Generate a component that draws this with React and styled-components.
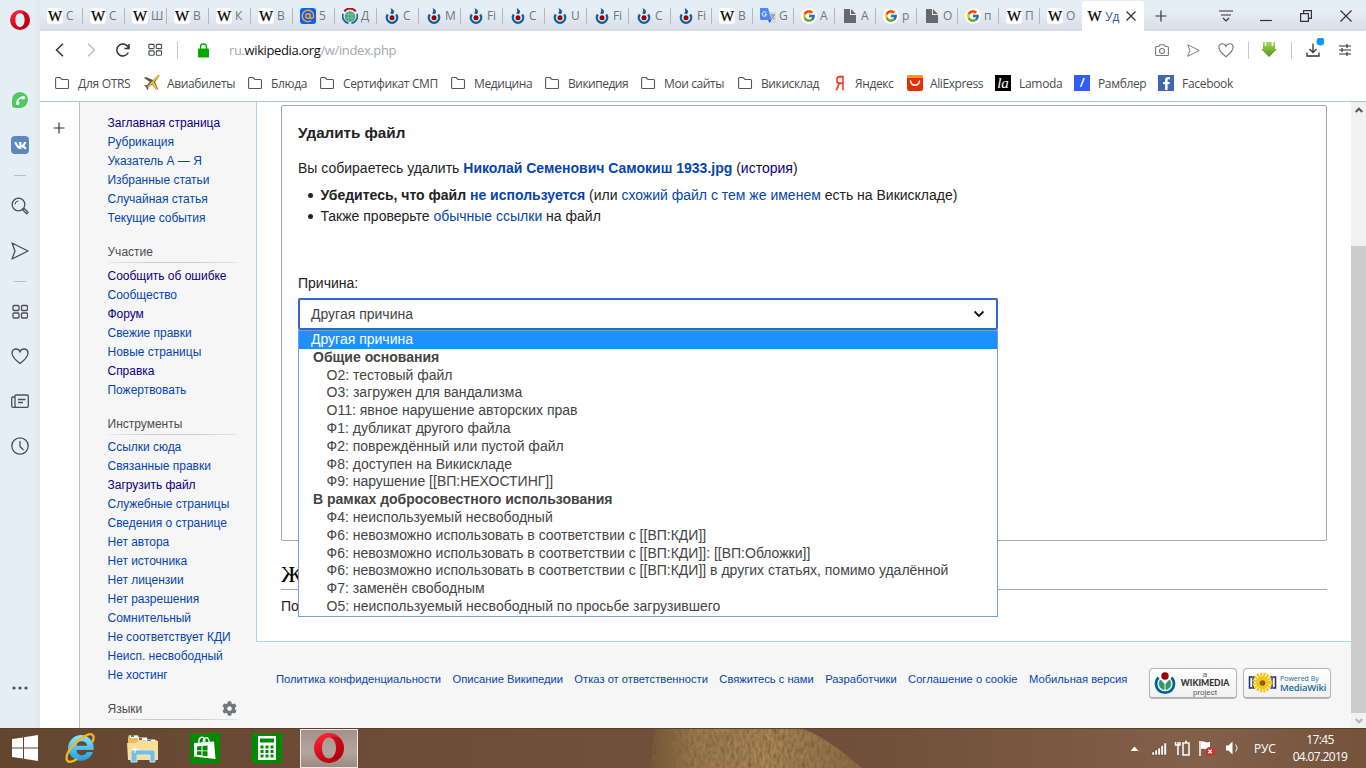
import React from 'react';
import styled, { createGlobalStyle } from 'styled-components';
import { FaCog, FaPhoneAlt, FaVk, FaFacebookF } from 'react-icons/fa';
import { FcGoogle } from 'react-icons/fc';

const GlobalStyle = createGlobalStyle`
  * {
    box-sizing: border-box;
  }
  body {
    margin: 0;
    overflow: hidden;
    background: #fff;
  }
  svg {
    display: block;
    flex: none;
  }
`;

const Screen = styled.div`
  width: 1366px;
  height: 768px;
  display: flex;
  flex-direction: column;
  overflow: hidden;
  font-family: "Liberation Sans", Arial, sans-serif;
`;
const Browser = styled.div`
  height: 728px;
  display: flex;
  background: #e5edf5;
`;
const Main = styled.div`
  width: 1326px;
  display: flex;
  flex-direction: column;
`;

// Боковая панель Opera
const Rail = styled.div`
  width: 40px;
  display: flex;
  flex-direction: column;
  align-items: center;
  background: linear-gradient(to right, #e5edf5 32px, #dfe7ef 40px);
`;
const RailSlot = styled.div`
  height: ${(props) => props.height}px;
  margin-top: ${(props) => props.space || 0}px;
  display: flex;
  align-items: center;
  justify-content: center;
`;
const RailLine = styled.div`
  width: 12px;
  height: 1px;
  background: #b3bec8;
`;
const VkTile = styled.div`
  width: 18px;
  height: 18px;
  border-radius: 4px;
  background: #5b88bd;
  color: #fff;
  display: flex;
  align-items: center;
  justify-content: center;
`;
const WhatsTile = styled.div`
  width: 16px;
  height: 16px;
  border-radius: 8px 8px 8px 3px;
  background: #4fc963;
  color: #fff;
  box-shadow: 0 0 0 1px #f4faf6;
  display: flex;
  align-items: center;
  justify-content: center;
`;

// Вкладки
const TabStrip = styled.div`
  height: 31px;
  display: flex;
  background: linear-gradient(#e5edf5 12px, #d7dde6 31px);
`;
const TabItem = styled.div`
  width: ${(props) => props.width}px;
  height: 31px;
  padding-left: 7px;
  display: flex;
  flex: none;
  align-items: center;
  &::after {
    content: "";
    width: 1px;
    height: 16px;
    margin-left: auto;
    background: ${(props) => (props.last ? 'transparent' : '#b3b8be')};
  }
`;
const TabIcon = styled.div`
  width: 16px;
  height: 16px;
  display: flex;
  align-items: center;
  justify-content: center;
  border-radius: ${(props) => (props.round ? '8px' : '3px')};
  background: ${(props) => props.bg || 'transparent'};
`;
const WikiW = styled.span`
  font: 15px/16px "Liberation Serif", serif;
  -webkit-text-stroke: 0.25px #000;
  color: #000;
`;
const TabText = styled.span`
  margin-left: 3px;
  white-space: nowrap;
  font: 12px "Open Sans", sans-serif;
  letter-spacing: -0.3px;
  color: ${(props) => (props.active ? '#2b5590' : '#72777c')};
`;
const ActiveTab = styled.div`
  width: 62px;
  height: 30px;
  margin-top: 1px;
  padding: 0 2px 0 5px;
  display: flex;
  flex: none;
  align-items: center;
  background: #fff;
  border-radius: 3px 3px 0 0;
`;
const WindowButtons = styled.div`
  flex: 1;
  display: flex;
  align-items: center;
  padding-left: 10px;
`;
const Hole = styled.div`
  width: ${(props) => props.width}px;
  height: ${(props) => props.height || 30}px;
  margin-left: ${(props) => props.space || 0}px;
  display: flex;
  flex: none;
  align-items: center;
  justify-content: center;
`;

// Адресная строка и закладки
const Toolbar = styled.div`
  height: 38px;
  display: flex;
  align-items: center;
  padding-left: 3px;
  background: #fff;
`;
const Divider = styled.div`
  width: 1px;
  height: 17px;
  margin: ${(props) => props.margin};
  flex: none;
  background: #c4c7ca;
`;
const Url = styled.div`
  flex: 1;
  margin-left: 16px;
  white-space: nowrap;
  font: 13px "Open Sans", sans-serif;
  letter-spacing: -0.38px;
  color: #a5a8ab;
  b {
    font-weight: normal;
    color: #111;
  }
`;
const Bookmarks = styled.div`
  height: 33px;
  display: flex;
  align-items: center;
  padding: 0 0 4px 15px;
  background: #fff;
  border-bottom: 1px solid #b5c1cc;
`;
const Bookmark = styled.div`
  width: ${(props) => props.width}px;
  display: flex;
  align-items: center;
  white-space: nowrap;
  font: 12px "Open Sans", sans-serif;
  letter-spacing: ${(props) => props.tracking || 0}px;
  color: #484c50;
`;
const BookmarkIcon = styled.div`
  width: 16px;
  height: 16px;
  margin-right: 7px;
`;
const Square = styled.div`
  width: 16px;
  height: 16px;
  margin-left: -1px;
  display: flex;
  align-items: center;
  justify-content: center;
  color: #fff;
  background: ${(props) => props.bg};
  font: ${(props) => props.font || 'bold 12px "Liberation Sans", sans-serif'};
  letter-spacing: 0;
`;
const YandexLetter = styled.div`
  width: 16px;
  text-align: center;
  color: #f33b1d;
  font: 20px/16px "Liberation Sans", sans-serif;
  letter-spacing: 0;
  transform: scaleX(0.65);
  -webkit-text-stroke: 0.6px #f33b1d;
`;

// Страница
const Page = styled.div`
  height: 626px;
  display: flex;
  background: #f6f6f6;
`;
const PlusColumn = styled.div`
  width: 40px;
  padding: 20px 0 0 13px;
  background: #fff;
  border-right: 1px solid #bfc1c4;
`;
const WikiNav = styled.div`
  width: 176px;
  padding: 12px 0 0 27.5px;
  overflow: hidden;
`;
const NavTitle = styled.div`
  width: 129.5px;
  height: 21px;
  margin: 14px 0 ${(props) => props.below || 4}px;
  padding-bottom: 1px;
  display: flex;
  align-items: center;
  justify-content: space-between;
  font-size: 12px;
  color: #4d4d4d;
  border-bottom: 1px solid;
  border-image: linear-gradient(to right, #eee, #c8ccd1 33%, #c8ccd1 66%, #e4e6e8) 1;
`;
const NavLink = styled.div`
  height: 19px;
  line-height: 19px;
  font-size: 12px;
  letter-spacing: -0.02px;
  white-space: nowrap;
  color: ${(props) => (props.visited ? '#0b0080' : '#0645ad')};
`;
const Column = styled.div`
  width: 1095px;
  display: flex;
  flex-direction: column;
`;
const Content = styled.div`
  height: 540px;
  padding: 3px 24px 0;
  background: #fff;
  border-left: 1px solid #a7d7f9;
  border-bottom: 1px solid #a7d7f9;
  font-size: 14px;
  color: #222;
`;
const Panel = styled.div`
  height: 436px;
  padding: 16px;
  border: 1px solid #a2a9b1;
  border-radius: 2px;
`;
const PanelTitle = styled.div`
  line-height: 22px;
  font-size: 15.2px;
  font-weight: bold;
`;
const Line = styled.div`
  margin-top: ${(props) => props.top}px;
  line-height: 22px;
`;
const Link = styled.span`
  color: ${(props) => (props.visited ? '#0b0080' : '#0645ad')};
`;
const List = styled.ul`
  margin: 6px 0 0;
  padding: 0 0 0 22.4px;
  list-style: none;
  line-height: 21px;
  li {
    display: flex;
    align-items: center;
    white-space: pre;
  }
  li::before {
    content: "";
    width: 5px;
    height: 5px;
    margin: 0 7.600px 0 -12.600px;
    border-radius: 50%;
    background: #222;
  }
`;
const SelectWrap = styled.div`
  position: relative;
  width: 700px;
  margin-top: 4px;
`;
const Select = styled.div`
  height: 32px;
  padding: 0 11px;
  display: flex;
  align-items: center;
  justify-content: space-between;
  border: 2px solid #36c;
  border-radius: 2px;
  color: #444;
`;
const Menu = styled.div`
  position: absolute;
  z-index: 2;
  top: 32px;
  left: 0;
  width: 700px;
  height: 287px;
  background: #fff;
  border: 1px solid #7b9bd0;
`;
const Option = styled.div`
  height: 17.8px;
  line-height: 17.8px;
  white-space: nowrap;
  padding-left: ${(props) => (props.group ? 14 : props.active ? 12 : 27.5)}px;
  font-weight: ${(props) => (props.group ? 'bold' : 'normal')};
  color: ${(props) => (props.active ? '#fff' : '#444')};
  background: ${(props) => (props.active ? '#1e90ff' : '#fff')};
`;
const LogTitle = styled.div`
  height: 32px;
  margin-top: 17px;
  font: 24px/33px "Liberation Serif", serif;
  color: #000;
  border-bottom: 1px solid #a2a9b1;
`;
const Footer = styled.div`
  height: 86px;
  padding: 26px 0 0 20px;
  display: flex;
  font-size: 11.2px;
  color: #0645ad;
`;
const FooterLinks = styled.div`
  width: 873px;
  height: 22px;
  flex: none;
  display: flex;
  align-items: center;
  gap: 11.4px;
  white-space: nowrap;
`;
const Badge = styled.div`
  width: 88px;
  height: 31px;
  margin-right: 6px;
  flex: none;
  display: flex;
  align-items: center;
  padding-left: 4px;
  border: 1px solid #b4b4b4;
  border-bottom-width: 2px;
  border-radius: 4px;
  background: linear-gradient(#fff, #f0f0f0);
`;
const WikimediaText = styled.div`
  width: 54px;
  margin-left: 2px;
  text-align: center;
  font: 8px/9px "Liberation Sans", sans-serif;
  color: #555;
  b {
    display: block;
    font: 900 8.6px/9px "Lato", sans-serif;
    color: #333;
  }
`;
const MediaWikiText = styled.div`
  margin-left: 3px;
  font: 7px/9px "Open Sans", sans-serif;
  color: #1d6c9c;
  white-space: nowrap;
  b {
    display: block;
    font: 600 9.5px/10px "Open Sans", sans-serif;
    letter-spacing: -0.2px;
  }
`;
const Scrollbar = styled.div`
  width: 15px;
  display: flex;
  flex-direction: column;
  align-items: center;
  background: #f1f1f1;
`;
const Thumb = styled.div`
  width: 15px;
  height: 467px;
  margin-top: 129px;
  background: #cdcdcd;
`;

// Панель задач Windows
const Taskbar = styled.div`
  position: relative;
  height: 40px;
  display: flex;
  align-items: center;
  overflow: hidden;
  color: #fff;
  background: linear-gradient(to right, #634630, #6b4b36 20%, #70503b 45%, #6f4f39 62%, #7b5941 78%, #83604a 88%, #755239);
`;
const Backdrop = styled.svg`
  position: absolute;
  top: 0;
  left: 0;
`;
const TaskIcon = styled.div`
  position: relative;
  width: ${(props) => props.width}px;
  height: 40px;
  display: flex;
  flex: none;
  align-items: center;
  justify-content: center;
`;
const GreenTile = styled.div`
  width: 30px;
  height: 30px;
  display: flex;
  align-items: center;
  justify-content: center;
  background: #008a00;
`;
const OperaTile = styled.div`
  position: relative;
  width: 58px;
  height: 39px;
  margin-left: 2px;
  display: flex;
  flex: none;
  align-items: center;
  justify-content: center;
  border: 1px solid #efe9e5;
  background: linear-gradient(#a3928a, #b3a59d 60%, #9b8a80);
`;
const Tray = styled.div`
  position: relative;
  width: 238px;
  margin-left: auto;
  display: flex;
  flex: none;
  align-items: center;
  font: 12px "Open Sans", sans-serif;
`;
const Lang = styled.div`
  width: 24px;
  margin-left: 14px;
  flex: none;
  letter-spacing: -0.2px;
`;
const Clock = styled.div`
  width: 70px;
  margin-left: 7px;
  flex: none;
  text-align: center;
  white-space: nowrap;
  font: 12px/17px "Open Sans", sans-serif;
  letter-spacing: -0.65px;
`;

const OperaLogo = ({ size }) => (
  <svg width={size} height={size} viewBox="0 0 30 30">
    <defs>
      <linearGradient id={`op${size}`} x1="0" y1="0" x2="0.4" y2="1">
        <stop offset="0" stopColor="#ff2a3a" />
        <stop offset="1" stopColor="#c3000f" />
      </linearGradient>
    </defs>
    <path fillRule="evenodd" fill={`url(#op${size})`} d="M15 0a15 15 0 1 0 0 30a15 15 0 1 0 0-30zM15 4.500c4.500 0 7 5 7 10.500s-2.500 10.500-7 10.500s-7-5-7-10.500s2.500-10.500 7-10.500z" />
    <path fill="#a50010" opacity=".45" d="M17 4.500c7 3 7 18 0 21c3 2 7 1 9-.5a15 15 0 0 0 0-20c-2-1.500-6-2.500-9-.5z" />
  </svg>
);

const HeartIcon = ({ size, color }) => (
  <svg width={size} height={size} viewBox="0 0 18 18" fill="none" stroke={color} strokeWidth="1.300">
    <path d="M9 16.500C5 13.500 1 10 1 6C1 3.500 2.800 2 5 2C7 2 8.300 3 9 4.800C9.700 3 11 2 13 2C15.200 2 17 3.500 17 6C17 10 13 13.500 9 16.500z" />
  </svg>
);

const SendIcon = ({ size, color }) => (
  <svg width={size} height={size} viewBox="0 0 18 18" fill="none" stroke={color} strokeWidth="1.300" strokeLinejoin="round">
    <path d="M1 1L17 9L1 17L4 9z" />
  </svg>
);

const GridIcon = ({ size }) => (
  <svg width={size} height={size} viewBox="0 0 16 16" fill="none" stroke="#4a4f54" strokeWidth="1.300">
    <rect x="1" y="1.500" width="6" height="5" rx="1" />
    <rect x="9.500" y="1.500" width="6" height="5" rx="1" />
    <rect x="1" y="9" width="6" height="5" rx="1" />
    <rect x="9.500" y="9" width="6" height="5" rx="1" />
  </svg>
);

const PlusIcon = () => (
  <svg width="12" height="12" viewBox="0 0 12 12" stroke="#333" strokeWidth="1.200"><path d="M6 .5v11M.5 6h11" /></svg>
);

// капля Викисклада
const CommonsIcon = () => (
  <svg width="14" height="16" viewBox="0 0 14 16" fill="none">
    <path d="M2.800 6.500a5.200 5.200 0 1 0 8.400 0" stroke="#0a6199" strokeWidth="2.300" />
    <path d="M5.500 0C9.500 2 10 3.800 7.800 6.200L5 5.200C6.500 3.800 6.500 2.500 5.500 0z" fill="#0a6199" />
    <circle cx="7" cy="9.800" r="2.500" fill="#900" />
  </svg>
);

const FolderIcon = () => (
  <svg width="16" height="16" viewBox="0 0 16 16" fill="none" stroke="#55595d" strokeWidth="1.100">
    <path d="M.6 3.500a1 1 0 0 1 1-1H5l2 2h5.500a1 1 0 0 1 1 1v7a1 1 0 0 1-1 1H1.600a1 1 0 0 1-1-1z" />
  </svg>
);

const tabs = [
  ['w', 'С'], ['w', 'С'], ['w', 'Ш'], ['w', 'В'], ['w', 'К'], ['w', 'В'], ['mail', '5'], ['meta', 'Д'],
  ['commons', 'С'], ['commons', 'М'], ['commons', 'Fi'], ['commons', 'С'], ['commons', 'U'], ['commons', 'Fi'],
  ['commons', 'С'], ['commons', 'Fi'], ['w', 'В'], ['translate', 'G'], ['google', 'А'], ['doc', 'А'],
  ['google', 'р'], ['doc', 'О'], ['google', 'п'], ['w', 'П'], ['w', 'О'],
];

const Favicon = ({ kind }) => {
  if (kind === 'w') return <TabIcon bg="#fff"><WikiW>W</WikiW></TabIcon>;
  if (kind === 'google') return <TabIcon bg="#fff" round><FcGoogle size={14} /></TabIcon>;
  if (kind === 'commons') return <TabIcon><CommonsIcon /></TabIcon>;
  if (kind === 'mail') {
    return (
      <TabIcon bg="#0b5fff">
        <svg width="14" height="14" viewBox="0 0 14 14" fill="none" stroke="#f9ab1b" strokeWidth="1.400">
          <circle cx="7" cy="7" r="2.300" />
          <path d="M9.300 4.700v3.500c0 1.800 3.400 1.600 3.400-1.200a5.700 5.700 0 1 0-2.500 4.700" />
        </svg>
      </TabIcon>
    );
  }
  if (kind === 'meta') {
    return (
      <svg width="16" height="16" viewBox="0 0 16 16" fill="none">
        <circle cx="8" cy="8.500" r="5.300" fill="#4aa382" />
        <path d="M4 6.500h8M4 10h8M6.500 4v9M10 4v9" stroke="#8fcdb0" strokeWidth=".6" />
        <path d="M2.300 3.400a7.200 7.200 0 0 1 11.400 0" stroke="#a0151b" strokeWidth="2" />
        <path d="M1 5.800a7.200 7.200 0 0 0 5.500 9.400M15 5.800a7.200 7.200 0 0 1-5.500 9.400" stroke="#1b6a93" strokeWidth="1.800" />
      </svg>
    );
  }
  if (kind === 'translate') {
    return (
      <svg width="16" height="16" viewBox="0 0 16 16">
        <path d="M6 4h10v11h-7z" fill="#d9dadb" />
        <path d="M0 0h8l3.500 12H1a1 1 0 0 1-1-1z" fill="#4a89f3" />
        <path d="M8 12h3.500L9.500 15z" fill="#3060c0" />
        <path d="M6.300 4.800a2.200 2.200 0 1 0 .3 1.600H4.600" fill="none" stroke="#fff" strokeWidth="1" />
        <path d="M10.500 7h4.500M12.500 6v1M14 7c-.5 2-1.500 3.200-3 4M11.500 8c.5 1.500 1.700 2.500 3 3.200" fill="none" stroke="#6b7a8c" strokeWidth=".8" />
      </svg>
    );
  }
  return (
    <svg width="16" height="16" viewBox="0 0 16 16" fill="#66696c">
      <path d="M2 1h6v6h6v8H2zM9 1l5 5H9z" />
    </svg>
  );
};

const bookmarks = [
  ['folder', 'Для OTRS', 89, -0.3], ['plane', 'Авиабилеты', 104, -0.4], ['folder', 'Блюда', 72, -0.3],
  ['folder', 'Сертификат СМП', 131, -0.35], ['folder', 'Медицина', 94, -0.4], ['folder', 'Википедия', 96, -0.5],
  ['folder', 'Мои сайты', 97, -0.4], ['folder', 'Викисклад', 94, -0.4], ['ya', 'Яндекс', 75, -0.4],
  ['ali', 'AliExpress', 89, -0.4], ['la', 'Lamoda', 79, -0.3], ['rambler', 'Рамблер', 84, -0.35],
  ['fb', 'Facebook', 75, -0.3],
];

const BookmarkPic = ({ kind }) => {
  if (kind === 'folder') return <FolderIcon />;
  if (kind === 'plane') {
    return (
      <svg width="16" height="16" viewBox="0 0 16 16">
        <path d="M0 3l2-1 7 3 5-5 1.500 1L11 7l3 7-1.500 1L8 9.500 4.500 12 4 15l-1-.5-1-2.500-2-1.500 3-.5 3-3z" fill="#56585a" />
        <path d="M15.500 0L13 1 3 12l1 .5L15 2zM10 7l3.500 7-1 1L8 9z" fill="#fcc21b" />
      </svg>
    );
  }
  if (kind === 'ya') return <YandexLetter>Я</YandexLetter>;
  if (kind === 'ali') {
    return (
      <svg width="16" height="16" viewBox="0 0 16 16">
        <rect width="16" height="16" rx="2.500" fill="#e62e04" />
        <path d="M0 3V2.500A2.500 2.500 0 0 1 2.500 0h11A2.500 2.500 0 0 1 16 2.500V3z" fill="#f7971d" />
        <path d="M3.500 6c1 5.500 8 5.500 9 0" fill="none" stroke="#fff" strokeWidth="1.500" strokeLinecap="round" />
      </svg>
    );
  }
  if (kind === 'la') return <Square bg="#000" font={'italic 15px/14px "Liberation Serif", serif'}>la</Square>;
  if (kind === 'rambler') return <Square bg="#315efb" font={'italic bold 12px/14px "Liberation Sans", sans-serif'}>/</Square>;
  return <Square bg="#4267b2"><FaFacebookF size={13} /></Square>;
};

const navTop = [['Заглавная страница', 1], ['Рубрикация'], ['Указатель А — Я'], ['Избранные статьи'], ['Случайная статья'], ['Текущие события']];
const navHelp = [['Сообщить об ошибке', 1], ['Сообщество'], ['Форум', 1], ['Свежие правки'], ['Новые страницы'], ['Справка', 1], ['Пожертвовать']];
const navTools = [
  ['Ссылки сюда'], ['Связанные правки'], ['Загрузить файл', 1], ['Служебные страницы'], ['Сведения о странице'],
  ['Нет автора'], ['Нет источника'], ['Нет лицензии'], ['Нет разрешения'], ['Сомнительный'],
  ['Не соответствует КДИ'], ['Неисп. несвободный'], ['Не хостинг'],
];

const options = [
  { text: 'Другая причина', active: true },
  { text: 'Общие основания', group: true },
  { text: 'О2: тестовый файл' },
  { text: 'О3: загружен для вандализма' },
  { text: 'О11: явное нарушение авторских прав' },
  { text: 'Ф1: дубликат другого файла' },
  { text: 'Ф2: повреждённый или пустой файл' },
  { text: 'Ф8: доступен на Викискладе' },
  { text: 'Ф9: нарушение [[ВП:НЕХОСТИНГ]]' },
  { text: 'В рамках добросовестного использования', group: true },
  { text: 'Ф4: неиспользуемый несвободный' },
  { text: 'Ф6: невозможно использовать в соответствии с [[ВП:КДИ]]' },
  { text: 'Ф6: невозможно использовать в соответствии с [[ВП:КДИ]]: [[ВП:Обложки]]' },
  { text: 'Ф6: невозможно использовать в соответствии с [[ВП:КДИ]] в других статьях, помимо удалённой' },
  { text: 'Ф7: заменён свободным' },
  { text: 'О5: неиспользуемый несвободный по просьбе загрузившего' },
];

const footerLinks = [
  'Политика конфиденциальности', 'Описание Википедии', 'Отказ от ответственности', 'Свяжитесь с нами',
  'Разработчики', 'Соглашение о cookie', 'Мобильная версия',
];

const NavList = ({ items }) => items.map(([text, visited]) => (
  <NavLink key={text} visited={visited}>{text}</NavLink>
));

const SideRail = () => (
  <Rail>
    <RailSlot height={39}><OperaLogo size={20} /></RailSlot>
    <RailSlot height={44} space={39}><WhatsTile><FaPhoneAlt size={9} style={{ transform: 'rotate(90deg)' }} /></WhatsTile></RailSlot>
    <RailSlot height={46}><VkTile><FaVk size={13} /></VkTile></RailSlot>
    <RailSlot height={15}><RailLine /></RailSlot>
    <RailSlot height={46}>
      <svg width="18" height="18" viewBox="0 0 18 18" fill="none" stroke="#4a4f54" strokeWidth="1.300">
        <circle cx="7.500" cy="7.500" r="6.300" />
        <path d="M4 7.500a3.500 3.500 0 0 1 3.500-3.500" strokeWidth="1" />
        <path d="M12 12l1.500-.3 3.500 3.500-1.300 1.500-3.700-3.500z" />
      </svg>
    </RailSlot>
    <RailSlot height={44}><SendIcon size={18} color="#4a4f54" /></RailSlot>
    <RailSlot height={17}><RailLine /></RailSlot>
    <RailSlot height={44}><GridIcon size={16} /></RailSlot>
    <RailSlot height={44}><HeartIcon size={18} color="#4a4f54" /></RailSlot>
    <RailSlot height={45}>
      <svg width="18" height="16" viewBox="0 0 18 16" fill="none" stroke="#4a4f54" strokeWidth="1.300">
        <rect x="4" y="2" width="13.300" height="12.300" rx="1" />
        <path d="M4 4H1.700a1 1 0 0 0-1 1v8a1.300 1.300 0 0 0 1.300 1.300h3M7 6.500h7.500M7 9.500h5" />
      </svg>
    </RailSlot>
    <RailSlot height={45}>
      <svg width="18" height="18" viewBox="0 0 18 18" fill="none" stroke="#4a4f54" strokeWidth="1.300">
        <circle cx="9" cy="9" r="8.200" />
        <path d="M9 4v5.500l3.500 3.500" />
      </svg>
    </RailSlot>
    <RailSlot height={30} space={205}>
      <svg width="16" height="4" viewBox="0 0 16 4" fill="#4a4f54">
        <circle cx="2" cy="2" r="1.600" />
        <circle cx="8" cy="2" r="1.600" />
        <circle cx="14" cy="2" r="1.600" />
      </svg>
    </RailSlot>
  </Rail>
);

const tabWidth = (i) => {
  if (i === 0) return 43;
  return i < 15 || i === 24 ? 42 : 41;
};

const Tabs = () => (
  <TabStrip>
    {tabs.map(([kind, text], i) => (
      <TabItem key={i} width={tabWidth(i)} last={i === 24}>
        <Favicon kind={kind} />
        <TabText>{text}</TabText>
      </TabItem>
    ))}
    <ActiveTab>
      <TabIcon><WikiW>W</WikiW></TabIcon>
      <TabText active>Уд</TabText>
      <Hole width={23}>
        <svg width="10" height="10" viewBox="0 0 10 10" stroke="#333" strokeWidth="1.300"><path d="M.5.500l9 9M9.500.500l-9 9" /></svg>
      </Hole>
    </ActiveTab>
    <WindowButtons>
      <Hole width={13}><PlusIcon /></Hole>
      <Hole width={78} space={20}>
        <svg width="14" height="12" viewBox="0 0 14 12" fill="none" stroke="#333" strokeWidth="1.200"><path d="M0 1h14M2 5h10M4 8l3 3 3-3" /></svg>
      </Hole>
      <Hole width={1}>
        <svg width="12" height="12" viewBox="0 0 12 12" stroke="#333" strokeWidth="1.200"><path d="M0 10.500h12" /></svg>
      </Hole>
      <Hole width={79}>
        <svg width="12" height="12" viewBox="0 0 12 12" fill="none" stroke="#333" strokeWidth="1.200"><path d="M.6 3.600h7.800v7.800H.6zM3.600 3.500V.6h7.800v7.800H8.500" /></svg>
      </Hole>
      <Hole width={1}>
        <svg width="12" height="12" viewBox="0 0 12 12" stroke="#333" strokeWidth="1.200"><path d="M.5.500l11 11M11.500.500l-11 11" /></svg>
      </Hole>
    </WindowButtons>
  </TabStrip>
);

const AddressBar = () => (
  <Toolbar>
    <Hole width={32}>
      <svg width="9" height="14" viewBox="0 0 9 14" fill="none" stroke="#333" strokeWidth="1.500"><path d="M8 .7L1.500 7 8 13.300" /></svg>
    </Hole>
    <Hole width={32}>
      <svg width="9" height="14" viewBox="0 0 9 14" fill="none" stroke="#bbb" strokeWidth="1.300"><path d="M1 .7L7.500 7 1 13.300" /></svg>
    </Hole>
    <Hole width={32}>
      <svg width="14" height="14" viewBox="0 0 14 14" fill="none" stroke="#333" strokeWidth="1.500"><path d="M12.300 9.500A6 6 0 1 1 12.500 5M13 1v4.500H8.500" /></svg>
    </Hole>
    <Hole width={32}><GridIcon size={14} /></Hole>
    <Divider margin="0 15px 0 6px" />
    <Hole width={20}>
      <svg width="11" height="15" viewBox="0 0 11 15">
        <rect y="5.500" width="11" height="9" rx="1" fill="#00a800" />
        <path d="M2.500 6V4a3 3 0 0 1 6 0v2" fill="none" stroke="#00a800" strokeWidth="1.300" />
      </svg>
    </Hole>
    <Url>ru.<b>wikipedia.org</b>/w/index.php</Url>
    <Hole width={14}>
      <svg width="14" height="13" viewBox="0 0 14 13" fill="none" stroke="#777" strokeWidth="1.100">
        <path d="M.6 3.500a1 1 0 0 1 1-1h2.200l1-1.700h4.400l1 1.700h2.200a1 1 0 0 1 1 1v7a1 1 0 0 1-1 1H1.600a1 1 0 0 1-1-1z" />
        <circle cx="7" cy="7" r="2.500" />
      </svg>
    </Hole>
    <Hole width={49}><SendIcon size={13} color="#777" /></Hole>
    <Hole width={15}><HeartIcon size={16} color="#777" /></Hole>
    <Divider margin="0 12px 0 15px" />
    <Hole width={16}>
      <svg width="16" height="16" viewBox="0 0 16 16">
        <defs>
          <linearGradient id="green" x1="0" y1="0" x2="0" y2="1">
            <stop offset="0" stopColor="#a5d853" />
            <stop offset="1" stopColor="#4f9410" />
          </linearGradient>
        </defs>
        <path d="M2 0h1.700v4h1.600V0h5.400v4h1.600V0H14v7h2l-8 8-8-8h2z" fill="url(#green)" />
      </svg>
    </Hole>
    <Divider margin="0 14px 0 14px" />
    <Hole width={18}>
      <svg width="18" height="24" viewBox="0 0 18 24" fill="none" stroke="#333" strokeWidth="1.300">
        <path d="M7 5.500v8.500M3.500 11L7 14.500 10.500 11M1 14.500V18h12v-3.500" />
        <circle cx="14.500" cy="3.500" r="4" fill="#0b98ff" stroke="none" />
      </svg>
    </Hole>
    <Hole width={42}>
      <svg width="12" height="12" viewBox="0 0 12 12" stroke="#333" strokeWidth="1.200"><path d="M0 2h12M0 6h12M0 10h12M8 0v4M3 4v4M8 8v4" /></svg>
    </Hole>
  </Toolbar>
);

const DeletePage = () => (
  <Page>
    <PlusColumn><PlusIcon /></PlusColumn>
    <WikiNav>
      <NavList items={navTop} />
      <NavTitle>Участие</NavTitle>
      <NavList items={navHelp} />
      <NavTitle below={3}>Инструменты</NavTitle>
      <NavList items={navTools} />
      <NavTitle>Языки<FaCog size={15} color="#72777d" /></NavTitle>
    </WikiNav>
    <Column>
      <Content>
        <Panel>
          <PanelTitle>Удалить файл</PanelTitle>
          <Line top={13}>
            Вы собираетесь удалить <Link><b>Николай Семенович Самокиш 1933.jpg</b></Link> (<Link visited>история</Link>)
          </Line>
          <List>
            <li><b>Убедитесь, что файл <Link>не используется</Link></b> (или <Link>схожий файл с тем же именем</Link> есть на Викискладе)</li>
            <li>Также проверьте <Link>обычные ссылки</Link> на файл</li>
          </List>
          <Line top={45}>Причина:</Line>
          <SelectWrap>
            <Select>
              Другая причина
              <svg width="12" height="8" viewBox="0 0 12 8" fill="none" stroke="#111" strokeWidth="1.800"><path d="M1.500 1.500L6 6l4.500-4.500" /></svg>
            </Select>
            <Menu>
              {options.map((option) => (
                <Option key={option.text} active={option.active} group={option.group}>{option.text}</Option>
              ))}
            </Menu>
          </SelectWrap>
        </Panel>
        <LogTitle>Ж</LogTitle>
        <Line top={5}>По</Line>
      </Content>
      <Footer>
        <FooterLinks>
          {footerLinks.map((text) => <span key={text}>{text}</span>)}
        </FooterLinks>
        <Badge>
          <svg width="22" height="23" viewBox="0 0 22 23" fill="none">
            <path d="M4.500 5.500a9 9 0 1 0 13 0" stroke="#069" strokeWidth="2.800" />
            <path d="M6.500 8a6 6 0 0 0 3.500 9.500V12z" fill="#396" stroke="#396" />
            <path d="M15.500 8a6 6 0 0 1-3.500 9.500V12z" fill="#396" stroke="#396" />
            <circle cx="11" cy="4" r="3.700" fill="#900" />
          </svg>
          <WikimediaText>a<b>WIKIMEDIA</b>project</WikimediaText>
        </Badge>
        <Badge>
          <svg width="29" height="22" viewBox="0 0 29 22" fill="none">
            <path d="M4 5H1.500v11H4M7 5H5v11h2M25 5h2.500v11H25M22 5h2v11h-2" stroke="#1b2f6b" strokeWidth="1.500" />
            <circle cx="14.500" cy="10.500" r="7.500" stroke="#f5c518" strokeWidth="5" strokeDasharray="2 1" />
            <circle cx="14.500" cy="10.500" r="6.500" fill="#f5c518" />
            <circle cx="14.500" cy="11" r="2.800" fill="#8a5a13" />
          </svg>
          <MediaWikiText>Powered By<b>MediaWiki</b></MediaWikiText>
        </Badge>
      </Footer>
    </Column>
    <Scrollbar>
      <Hole width={15} height={15}>
        <svg width="8" height="6" viewBox="0 0 8 6" fill="none" stroke="#555" strokeWidth="2"><path d="M.7 5L4 1.700 7.300 5" /></svg>
      </Hole>
      <Thumb />
      <Hole width={15} height={15}>
        <svg width="8" height="6" viewBox="0 0 8 6" fill="none" stroke="#b5b5b5" strokeWidth="2"><path d="M.7 1L4 4.300 7.300 1" /></svg>
      </Hole>
    </Scrollbar>
  </Page>
);

const WindowsBar = () => (
  <Taskbar>
    <Backdrop width="1366" height="40" viewBox="0 0 1366 40">
      <defs>
        <filter id="grain" x="0" y="0" width="1" height="1">
          <feTurbulence type="fractalNoise" baseFrequency="0.35 0.15" numOctaves="3" seed="4" result="noise" />
          <feColorMatrix in="noise" values="0 0 0 0 .2  0 0 0 0 .12  0 0 0 0 .04  0 1.800 0 0 -.55" result="dark" />
          <feComposite in="dark" in2="SourceGraphic" operator="in" result="spots" />
          <feMerge><feMergeNode in="SourceGraphic" /><feMergeNode in="spots" /></feMerge>
        </filter>
        <linearGradient id="rock" x1="0" x2="1">
          <stop offset="0" stopColor="#6f5036" />
          <stop offset=".2" stopColor="#9c7850" />
          <stop offset=".55" stopColor="#ab8659" />
          <stop offset="1" stopColor="#8a6846" />
        </linearGradient>
      </defs>
      <path d="M656 0H798C818 5 836 18 862 40H650C652 25 652 12 656 0z" fill="url(#rock)" filter="url(#grain)" />
      <path d="M0 .5h1366" stroke="#54402f" />
    </Backdrop>
    <TaskIcon width={50}>
      <svg width="26" height="26" viewBox="0 0 26 26" fill="#fff"><path d="M0 4l11-1.500V12.500H0zM12 2.300L26 0v12.500H12zM0 13.500h11v10L0 22zM12 13.500h14V26l-14-2.300z" /></svg>
    </TaskIcon>
    <TaskIcon width={62}>
      <svg width="32" height="32" viewBox="0 0 32 32" fill="none">
        <defs>
          <linearGradient id="ie" x1="0" y1="0" x2="0" y2="1">
            <stop offset="0" stopColor="#8be4fd" />
            <stop offset="1" stopColor="#1f9fe2" />
          </linearGradient>
        </defs>
        <path d="M28.500 18H11.500a5.500 5.500 0 0 0 10.500 2h6A12.800 12.800 0 1 1 28.500 18zM11.500 13.800h10.700a5.400 5.400 0 0 0-10.700 0z" fillRule="evenodd" fill="url(#ie)" />
        <path d="M27.500 10C30 4 28 .5 22 3C12 7-2 22 2.500 29C5 31 9 29 12 27" stroke="#f3b91b" strokeWidth="2.300" />
      </svg>
    </TaskIcon>
    <TaskIcon width={62}>
      <svg width="32" height="30" viewBox="0 0 32 30">
        <path d="M1 4l1-2h9l1 3h8l1 2h9v20H1z" fill="#e3bd63" />
        <path d="M3 3h8v2H3z" fill="#fff" /><path d="M4 2h3v2H4z" fill="#19a93c" />
        <path d="M11 4.500h9v3h-9z" fill="#fff" /><path d="M12 5h3v2h-3z" fill="#d8392c" />
        <path d="M19 6.500h9v3h-9z" fill="#fff" /><path d="M20 7h4v2h-4z" fill="#2b8be0" />
        <path d="M0 10h9l2-2h20v19H1z" fill="#f7df94" />
        <path d="M4 29V19a2 2 0 0 1 2-2h20a2 2 0 0 1 2 2v10h-5v-7H10v7z" fill="#78bde0" stroke="#c9ecf9" strokeWidth="1" />
        <path d="M8 13v7M4.500 16.500h7" stroke="#fff" strokeWidth="1" />
      </svg>
    </TaskIcon>
    <TaskIcon width={62}>
      <GreenTile>
        <svg width="24" height="26" viewBox="0 0 24 26">
          <path d="M1 8l20-1.500L22.500 24 1 21.500z" fill="#fff" />
          <path d="M6 8c-1-7 6-8 6-1M10 8c0-7 7-7 6 0" fill="none" stroke="#fff" strokeWidth="1.300" />
          <path d="M4 11.500l4.500-.5v4.300H4zM9.500 11l5-.6v5H9.500zM4 16.300h4.500v4L4 19.800zM9.500 16.300h5v5l-5-.6z" fill="#008a00" />
        </svg>
      </GreenTile>
    </TaskIcon>
    <TaskIcon width={62}>
      <GreenTile>
        <svg width="18" height="24" viewBox="0 0 18 24">
          <path d="M0 0h18v24H0z" fill="#fff" />
          <path d="M2 2.500h14v4H2zM2.500 9.500h3v3h-3zM7.500 9.500h3v3h-3zM12.500 9.500h3v3h-3zM2.500 14h3v3h-3zM7.500 14h3v3h-3zM12.500 14h3v3h-3zM2.500 18.500h3v3h-3zM7.500 18.500h3v3h-3zM12.500 18.500h3v3h-3z" fill="#008a00" />
        </svg>
      </GreenTile>
    </TaskIcon>
    <OperaTile><OperaLogo size={30} /></OperaTile>
    <Tray>
      <svg width="112" height="22" viewBox="0 0 112 22">
        <path d="M2.500 14l4-4.500 4 4.500z" fill="#fff" />
        <g fill="#fff" stroke="#453326" strokeWidth=".4">
          <path d="M24 15h2.400v3H24zM27 13h2.400v5H27zM30 11h2.400v7H30zM33 8.500h2.400V18H33zM36 6h2.400v12H36z" />
        </g>
        <g fill="none" stroke="#fff" strokeWidth="1.500">
          <path d="M55 6h6v12h-6zM57 4.500h2" />
          <path d="M50 5v4M47.500 5v3h4.500V5M50 9v9" />
        </g>
        <path d="M72 4v15" stroke="#fff" strokeWidth="1.500" />
        <path d="M73 4.500c3-1 4 2 9 .5v7c-4 1.500-6-1-9 0z" fill="#fff" />
        <circle cx="82" cy="14.500" r="4.500" fill="#dc2a22" />
        <path d="M80.300 12.800l3.500 3.500M83.800 12.800l-3.500 3.500" stroke="#fff" strokeWidth="1.300" />
        <path d="M98 8.500h2.500l4-4v13l-4-4H98z" fill="#fff" />
        <path d="M107.500 7.500c2 2 2 5 0 7" fill="none" stroke="#fff" />
      </svg>
      <Lang>РУС</Lang>
      <Clock>17:45<br />04.07.2019</Clock>
    </Tray>
  </Taskbar>
);

const App = () => {
  return (
    <>
      <GlobalStyle />
      <Screen>
        <Browser>
          <SideRail />
          <Main>
            <Tabs />
            <AddressBar />
            <Bookmarks>
              {bookmarks.map(([kind, text, width, tracking]) => (
                <Bookmark key={text} width={width} tracking={tracking}>
                  <BookmarkIcon><BookmarkPic kind={kind} /></BookmarkIcon>
                  {text}
                </Bookmark>
              ))}
            </Bookmarks>
            <DeletePage />
          </Main>
        </Browser>
        <WindowsBar />
      </Screen>
    </>
  );
};

export default App;
